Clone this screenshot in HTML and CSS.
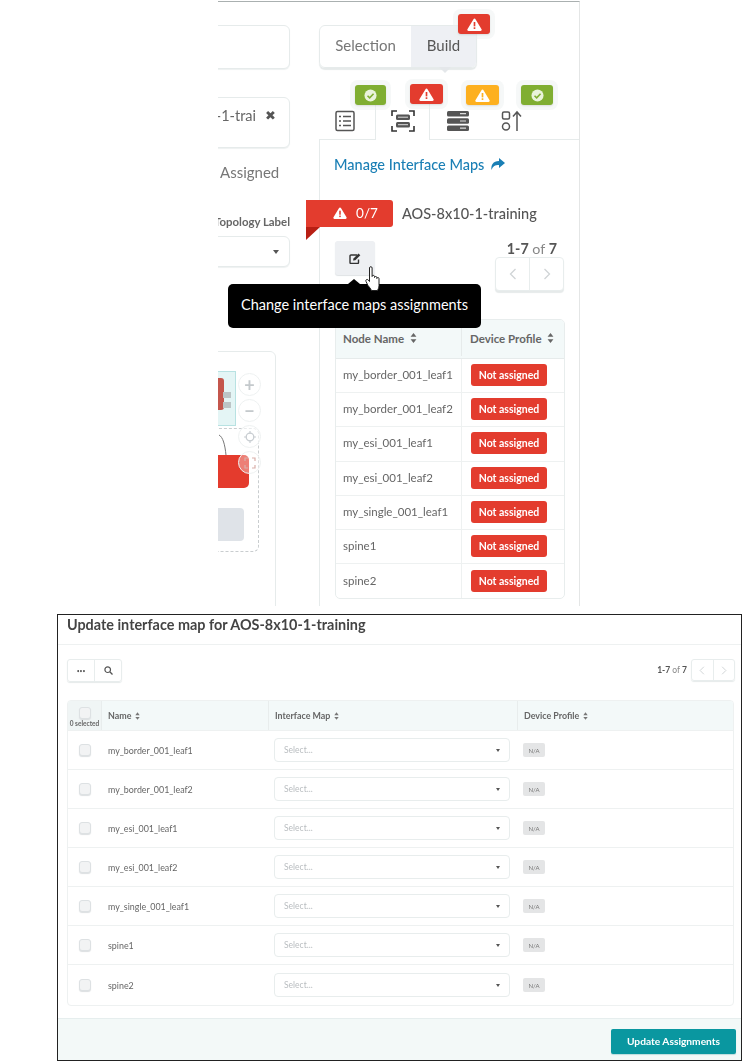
FILE: index.html
```html
<!DOCTYPE html>
<html lang="en">
<head>
<meta charset="utf-8">
<title>Interface map assignments</title>
<link rel="stylesheet" href="styles.css">
</head>
<body>
<svg class="defs" width="0" height="0" aria-hidden="true">
  <symbol id="warn" viewBox="0 0 16 14"><path d="M8 .6c.5 0 .9.3 1.1.7l6.5 10.8c.5.8-.1 1.8-1.1 1.8H1.5c-1 0-1.6-1-1.1-1.8L6.900 1.300C7.100.900 7.500.600 8 .600z" fill="#fff"/><rect class="warn-mark" x="7.100" y="4.300" width="1.800" height="4.700"/><rect class="warn-mark" x="7.100" y="10" width="1.800" height="1.800"/></symbol>
  <symbol id="ok" viewBox="0 0 14 14"><circle cx="7" cy="7" r="6.500" fill="#e9f3dc"/><path d="M3.800 7.200l2.300 2.300 4.200-4.400" fill="none" stroke="#7fae33" stroke-width="1.700"/></symbol>
  <symbol id="sort" viewBox="0 0 8 12"><path d="M4 0l3.500 4.600h-7zM4 12L.5 7.400h7z"/></symbol>
  <symbol id="chev-l" viewBox="0 0 8 12"><path d="M6.500 1L1.500 6l5 5" fill="none" stroke="currentColor" stroke-width="1.300"/></symbol>
  <symbol id="chev-r" viewBox="0 0 8 12"><path d="M1.500 1l5 5-5 5" fill="none" stroke="currentColor" stroke-width="1.300"/></symbol>
</svg>

<section class="shot">
  <div class="left">
    <div class="field field-top"></div>
    <div class="field field-chip"><span class="chip-text">AOS-8x10-1-trai</span><span class="chip-x">✖</span></div>
    <div class="assigned">Assigned</div>
    <div class="topo-label">Topology Label</div>
    <div class="field field-select"><span class="caret"></span></div>
    <div class="canvas">
      <div class="c-teal"><div class="c-red-soft"></div><div class="c-bar c-bar-a"></div><div class="c-bar c-bar-b"></div></div>
      <div class="c-dashed"></div>
      <svg class="c-curve" width="12" height="24" viewBox="0 0 12 24"><path d="M0 2c4 2 6 10 7 20" fill="none" stroke="#777" stroke-width="1"/></svg>
      <div class="c-red"></div>
      <div class="c-grey"></div>
      <div class="c-zoom">
        <div class="c-circle">+</div>
        <div class="c-circle">−</div>
        <div class="c-circle"><svg width="12" height="12" viewBox="0 0 12 12"><circle cx="6" cy="6" r="3.800" fill="none" stroke="#c9ced2" stroke-width="1.300"/><path d="M6 0v3M6 9v3M0 6h3M9 6h3" stroke="#c9ced2" stroke-width="1.200"/></svg></div>
        <div class="c-circle c-circle-fill"><svg width="12" height="12" viewBox="0 0 12 12"><path d="M1 4V1h3M8 1h3v3M11 8v3H8M4 11H1V8" fill="none" stroke="#d9b0aa" stroke-width="1.200"/></svg></div>
      </div>
    </div>
  </div>

  <div class="right">
    <div class="toggle">
      <div class="toggle-item">Selection</div>
      <div class="toggle-item toggle-on">Build</div>
      <div class="flag-badge badge-red badge-build"><svg class="i-warn"><use href="#warn"/></svg></div>
    </div>

    <div class="tabs">
      <div class="tab">
        <svg width="22" height="22" viewBox="0 0 22 22"><rect x="2" y="1.500" width="18" height="19" rx="1.500" fill="none" stroke="#555" stroke-width="1.500"/><path d="M5 6.500h2M9 6.500h8M5 11h2M9 11h8M5 15.500h2M9 15.500h8" stroke="#555" stroke-width="1.700"/></svg>
      </div>
      <div class="tab tab-active">
        <svg width="24" height="22" viewBox="0 0 24 22"><path d="M1 6V1h5M18 1h5v5M23 16v5h-5M6 21H1v-5" fill="none" stroke="#333" stroke-width="1.600"/><rect x="5" y="4.500" width="14" height="5.500" rx="1.500" fill="#555"/><rect x="5" y="12" width="14" height="5.500" rx="1.500" fill="#555"/><path d="M7 7.200h10M7 14.700h10" stroke="#ddd" stroke-width="1"/></svg>
      </div>
      <div class="tab">
        <svg width="24" height="22" viewBox="0 0 24 22"><rect x="1" y="1" width="22" height="5.500" rx="1.500" fill="#555"/><rect x="1" y="8.200" width="22" height="5.500" rx="1.500" fill="#555"/><rect x="1" y="15.500" width="22" height="5.500" rx="1.500" fill="#555"/><path d="M14 3.700h6M14 11h6M14 18.200h6" stroke="#ddd" stroke-width="1.200"/></svg>
      </div>
      <div class="tab">
        <svg width="22" height="22" viewBox="0 0 22 22"><rect x="1.500" y="2" width="7" height="7" rx="1.500" fill="none" stroke="#555" stroke-width="1.500"/><circle cx="5" cy="16.500" r="3.500" fill="none" stroke="#555" stroke-width="1.500"/><path d="M16 21V2M12 6.500L16 2l4 4.500" fill="none" stroke="#555" stroke-width="1.500"/></svg>
      </div>
      <div class="flag-badge badge-green badge-t1"><svg class="i-ok"><use href="#ok"/></svg></div>
      <div class="flag-badge badge-red badge-t2"><svg class="i-warn"><use href="#warn"/></svg></div>
      <div class="flag-badge badge-amber badge-t3"><svg class="i-warn i-warn-amber"><use href="#warn"/></svg></div>
      <div class="flag-badge badge-green badge-t4"><svg class="i-ok"><use href="#ok"/></svg></div>
    </div>

    <div class="panel">
      <div class="manage">Manage Interface Maps
        <svg width="15" height="12" viewBox="0 0 15 12"><path d="M9 0l6 5-6 5V7C5 7 3 8 1.500 12 .8 7 3 3 9 3z" fill="#1a7fb5"/></svg>
      </div>
      <div class="bp-row">
        <div class="ribbon"><svg class="i-warn i-warn-lg"><use href="#warn"/></svg><span>0/7</span></div>
        <div class="bp-name">AOS-8x10-1-training</div>
      </div>
      <div class="tools">
        <div class="edit-btn">
          <svg width="12" height="11" viewBox="0 0 12 11"><path d="M8 2H2a1 1 0 0 0-1 1v6.500a1 1 0 0 0 1 1h6.500a1 1 0 0 0 1-1V6.500" fill="none" stroke="#333" stroke-width="1.400"/><path d="M4 7.500l.5-2L9.500.5l1.800 1.800-5 5z" fill="#333"/></svg>
        </div>
        <div class="pager-wrap">
          <div class="count"><b>1-7</b> of <b>7</b></div>
          <div class="pager"><span><svg width="8" height="12"><use href="#chev-l"/></svg></span><span><svg width="8" height="12"><use href="#chev-r"/></svg></span></div>
        </div>
      </div>
      <div class="nodes">
        <div class="nodes-head"><div class="nh-a">Node Name <svg class="i-sort"><use href="#sort"/></svg></div><div class="nh-b">Device Profile <svg class="i-sort"><use href="#sort"/></svg></div></div>
        <div class="node-row"><div class="nr-a">my_border_001_leaf1</div><div class="nr-b"><span class="na-badge">Not assigned</span></div></div>
        <div class="node-row"><div class="nr-a">my_border_001_leaf2</div><div class="nr-b"><span class="na-badge">Not assigned</span></div></div>
        <div class="node-row"><div class="nr-a">my_esi_001_leaf1</div><div class="nr-b"><span class="na-badge">Not assigned</span></div></div>
        <div class="node-row"><div class="nr-a">my_esi_001_leaf2</div><div class="nr-b"><span class="na-badge">Not assigned</span></div></div>
        <div class="node-row"><div class="nr-a">my_single_001_leaf1</div><div class="nr-b"><span class="na-badge">Not assigned</span></div></div>
        <div class="node-row"><div class="nr-a">spine1</div><div class="nr-b"><span class="na-badge">Not assigned</span></div></div>
        <div class="node-row"><div class="nr-a">spine2</div><div class="nr-b"><span class="na-badge">Not assigned</span></div></div>
      </div>
    </div>
  </div>

  <div class="tooltip">Change interface maps assignments</div>
  <svg class="hand" width="18" height="27" viewBox="0 0 18 27"><path d="M4.500 2c0-1.800 2.600-1.800 2.600 0v8.500c0-1.500 2.400-1.500 2.400 0v1c0-1.400 2.300-1.400 2.300 0v1c0-1.300 2.200-1.300 2.200 0v7c0 2.500-1 3.500-1.500 5H6.500c-.8-2-2-3-3.500-5L1 15.500c-.8-1.600 1-2.800 2.300-1.500l1.200 1.500z" fill="#fff" stroke="#222" stroke-width="1"/></svg>
</section>

<section class="modal">
  <header class="m-title">Update interface map for AOS-8x10-1-training</header>
  <div class="m-body">
    <div class="m-tools">
      <div class="btn-group">
        <span class="dots">•••</span>
        <span class="mag"><svg width="9" height="9" viewBox="0 0 9 9"><circle cx="3.700" cy="3.700" r="2.800" fill="none" stroke="#555" stroke-width="1.200"/><path d="M5.800 5.800L8.500 8.500" stroke="#555" stroke-width="1.300"/></svg></span>
      </div>
      <div class="m-pager-wrap">
        <div class="m-count"><b>1-7</b> of <b>7</b></div>
        <div class="m-pager"><span><svg width="6" height="9"><use href="#chev-l"/></svg></span><span><svg width="6" height="9"><use href="#chev-r"/></svg></span></div>
      </div>
    </div>
    <div class="m-table">
      <div class="m-row m-head">
        <div class="m-c1 m-c1-head"><span class="cb"></span><span class="sel-count">0 selected</span></div>
        <div class="m-c2">Name <svg class="i-sort-sm"><use href="#sort"/></svg></div>
        <div class="m-c3">Interface Map <svg class="i-sort-sm"><use href="#sort"/></svg></div>
        <div class="m-c4">Device Profile <svg class="i-sort-sm"><use href="#sort"/></svg></div>
      </div>
      <div class="m-row"><div class="m-c1"><span class="cb"></span></div><div class="m-c2">my_border_001_leaf1</div><div class="m-c3"><div class="m-select">Select...<span class="caret caret-sm"></span></div></div><div class="m-c4"><span class="tag">N/A</span></div></div>
      <div class="m-row"><div class="m-c1"><span class="cb"></span></div><div class="m-c2">my_border_001_leaf2</div><div class="m-c3"><div class="m-select">Select...<span class="caret caret-sm"></span></div></div><div class="m-c4"><span class="tag">N/A</span></div></div>
      <div class="m-row"><div class="m-c1"><span class="cb"></span></div><div class="m-c2">my_esi_001_leaf1</div><div class="m-c3"><div class="m-select">Select...<span class="caret caret-sm"></span></div></div><div class="m-c4"><span class="tag">N/A</span></div></div>
      <div class="m-row"><div class="m-c1"><span class="cb"></span></div><div class="m-c2">my_esi_001_leaf2</div><div class="m-c3"><div class="m-select">Select...<span class="caret caret-sm"></span></div></div><div class="m-c4"><span class="tag">N/A</span></div></div>
      <div class="m-row"><div class="m-c1"><span class="cb"></span></div><div class="m-c2">my_single_001_leaf1</div><div class="m-c3"><div class="m-select">Select...<span class="caret caret-sm"></span></div></div><div class="m-c4"><span class="tag">N/A</span></div></div>
      <div class="m-row"><div class="m-c1"><span class="cb"></span></div><div class="m-c2">spine1</div><div class="m-c3"><div class="m-select">Select...<span class="caret caret-sm"></span></div></div><div class="m-c4"><span class="tag">N/A</span></div></div>
      <div class="m-row"><div class="m-c1"><span class="cb"></span></div><div class="m-c2">spine2</div><div class="m-c3"><div class="m-select">Select...<span class="caret caret-sm"></span></div></div><div class="m-c4"><span class="tag">N/A</span></div></div>
    </div>
  </div>
  <footer class="m-foot"><div class="update-btn">Update Assignments</div></footer>
</section>
</body>
</html>
```

FILE: styles.css
```css
* { box-sizing: border-box; }
html, body { margin: 0; padding: 0; background: #fff; }
body { width: 742px; height: 1062px; overflow: hidden; font-family: Lato, "Open Sans", sans-serif; color: #555; }
.defs { position: absolute; }

/* ---------- top screenshot ---------- */
.shot {
  position: relative; display: flex; width: 362px; height: 605px; margin: 1px 0 0 218px;
  border-top: 1px solid #aab0b0; border-right: 1px solid #e4e6e6; overflow: hidden; filter: blur(.6px);
}
.left { flex: none; width: 101px; display: flex; flex-direction: column; }
.field { margin: 0 29px 0 -12px; border: 1px solid #e6ebeb; border-radius: 6px; background: #fff; box-shadow: 0 1px 1px #eef1f1; flex: none; position: relative; }
.field-top { height: 44px; margin-top: 23px; }
.field-chip { height: 51px; margin-top: 28px; display: flex; justify-content: flex-end; align-items: flex-start; gap: 9px; padding: 8px 13px 0 0; font-size: 14.500px; color: #666; white-space: nowrap; }
.chip-text { line-height: 19px; }
.chip-x { font-size: 13px; line-height: 19px; color: #555; }
.assigned { font-size: 15px; line-height: 20px; margin: 14px 0 0 2px; color: #777; white-space: nowrap; height: 20px; }
.topo-label { display: flex; justify-content: flex-end; margin: 33px 29px 0 0; height: 14px; font-size: 11.400px; line-height: 14px; font-weight: 700; color: #666; white-space: nowrap; }
.field-select { height: 31px; margin-top: 7px; }
.caret { position: absolute; right: 10px; top: 13px; border: 3.500px solid transparent; border-top: 4px solid #555; border-bottom: 0; }
.canvas { position: relative; flex: none; height: 300px; margin: 84px 43px 0 -12px; border: 1px solid #e6ebeb; border-radius: 6px; }
.c-teal { position: absolute; left: 0; top: 19px; width: 29px; height: 55px; background: #e4f5f5; border: 1px solid #b8e2e2; overflow: hidden; }
.c-red-soft { position: absolute; right: 11px; top: 6px; width: 20px; height: 32px; background: #c4564c; border-radius: 3px; }
.c-bar { position: absolute; right: 4px; width: 8px; height: 6px; background: #bcc5c6; }
.c-bar-a { top: 20px; }
.c-bar-b { top: 30px; }
.c-dashed { position: absolute; left: -4px; top: 76px; width: 56px; height: 124px; border: 1.500px dashed #c9cdcf; border-radius: 6px; }
.c-curve { position: absolute; left: 12px; top: 81px; }
.c-red { position: absolute; left: 0; top: 103px; width: 42px; height: 33px; background: #e43b2d; border-radius: 0 5px 5px 0; }
.c-grey { position: absolute; left: 0; top: 156px; width: 37px; height: 33px; background: #dfe3e8; border-radius: 0 4px 4px 0; }
.c-zoom { position: absolute; left: 31px; top: 21px; display: flex; flex-direction: column; gap: 3px; }
.c-circle { width: 23px; height: 23px; border: 1px solid #eef1f1; border-radius: 50%; background: rgba(255,255,255,.6); display: flex; align-items: center; justify-content: center; font-size: 18px; line-height: 1; font-weight: 700; color: #c4c9cc; }
.c-circle-fill { background: rgba(255,255,255,.35); }

.right { flex: none; width: 260px; display: flex; flex-direction: column; }
.toggle { position: relative; display: flex; width: 158px; height: 43px; margin-top: 23px; border: 1px solid #e6ebeb; border-radius: 6px; box-shadow: 0 2px 1px #e6eaea; flex: none; }
.toggle-item { width: 91px; display: flex; align-items: center; justify-content: center; font-size: 15px; color: #777; padding-bottom: 4px; }
.toggle-on { flex: 1; width: auto; background: #eef0f4; border-radius: 0 5px 5px 0; color: #555; }
.toggle-on::after { content: ""; position: absolute; left: 119px; bottom: -6px; border: 6px solid transparent; border-top: 6px solid #e4e7ea; border-bottom: 0; }
.flag-badge { position: absolute; display: flex; align-items: center; justify-content: center; border-radius: 3px; height: 20px; box-shadow: 0 0 0 5px rgba(235,240,240,.45), 0 1px 2px rgba(0,0,0,.2); z-index: 2; }
.badge-red { background: #e33c2e; --mark: #e33c2e; }
.badge-green { background: #80ae32; }
.badge-amber { background: #fdb01f; --mark: #fdb01f; }
.badge-build { left: 138px; top: -12px; width: 32px; }
.i-warn { width: 15px; height: 13px; }
.warn-mark { fill: var(--mark, #e33c2e); }
.i-ok { width: 13px; height: 13px; }

.tabs { position: relative; flex: none; display: flex; height: 67px; margin-top: 5px; }
.tab { position: relative; flex: none; width: 55px; height: 67px; padding-top: 37px; display: flex; justify-content: center; border-bottom: 1px solid #e6ebeb; }
.tab:nth-child(1) { width: 56px; padding-right: 5px; }
.tab svg { flex: none; }
.tab-active { width: 55px; border: 1px solid #e6ebeb; border-bottom: 0; padding-top: 36px; clip-path: inset(23px -1px 0 -1px); }
.tab:nth-child(3) { width: 56px; padding-right: 0; }
.tab:nth-child(4) { flex: 1; justify-content: flex-start; padding-left: 15px; }
.badge-t1 { left: 36px; top: 12px; width: 31px; }
.badge-t2 { left: 91px; top: 11px; width: 33px; }
.badge-t3 { left: 147px; top: 12px; width: 33px; }
.badge-t4 { left: 202px; top: 12px; width: 32px; }

.panel { flex: 1; border-left: 1px solid #e6ebeb; padding: 0 0 0 15px; display: flex; flex-direction: column; }
.manage { display: flex; align-items: center; gap: 6px; height: 18px; margin-top: 15px; margin-left: -1px; font-size: 14.500px; color: #1a7fb5; white-space: nowrap; font-weight: 500; }
.bp-row { display: flex; align-items: center; height: 27px; margin: 27px 0 0 -29px; position: relative; }
.ribbon { position: relative; width: 87px; height: 27px; background: #e33c2e; border-radius: 0 3px 3px 0; color: #fff; display: flex; align-items: center; justify-content: center; gap: 9px; font-size: 13.500px; font-weight: 400; padding-left: 12px; padding-bottom: 2px; --mark: #e33c2e; }
.ribbon::after { content: ""; position: absolute; left: 0; top: 27px; border-top: 13px solid #b81f14; border-left: 14px solid transparent; transform: scaleX(-1); }
.i-warn-lg { width: 14px; height: 12px; }
.bp-name { margin-left: 9px; font-size: 14.500px; color: #555; font-weight: 500; white-space: nowrap; }
.tools { display: flex; justify-content: space-between; height: 51px; margin-top: 14px; flex: none; }
.edit-btn { width: 40px; height: 34px; background: #eef0f3; border-radius: 3px; box-shadow: 0 1px 1px #dfe3e5; display: flex; align-items: center; justify-content: center; }
.pager-wrap { display: flex; flex-direction: column; align-items: flex-end; width: 70px; margin-right: 15px; position: relative; }
.count { font-size: 14.300px; line-height: 18px; color: #888; margin: -1px 7px 0 0; white-space: nowrap; }
.count b { font-weight: 700; color: #555; }
.pager { display: flex; width: 69px; height: 34px; margin-top: -1px; border: 1px solid #e8eded; border-radius: 4px; box-shadow: 0 2px 1px #e6eaea; background: #fff; }
.pager span { flex: 1; display: flex; align-items: center; justify-content: center; color: #d0d4d6; }
.pager span + span { border-left: 1px solid #e8eded; }
.nodes { width: 230px; margin-top: 27px; border: 1px solid #e8eded; border-radius: 5px; flex: none; overflow: hidden; }
.nodes-head { display: flex; height: 39px; background: #f3f9f9; border-bottom: 1px solid #e6ebeb; font-size: 11.500px; font-weight: 700; color: #666; white-space: nowrap; padding-bottom: 2px; }
.nh-a { width: 126px; padding-left: 7px; display: flex; align-items: center; gap: 6px; border-right: 1px solid #e6ebeb; }
.nh-b { flex: 1; padding-left: 8px; display: flex; align-items: center; gap: 5px; }
.i-sort { width: 7px; height: 10px; fill: #666; flex: none; }
.node-row { display: flex; height: 34.200px; border-bottom: 1px solid #eef1f1; font-size: 11.500px; color: #666; }
.node-row:last-child { border-bottom: 0; }
.nr-a { width: 126px; padding: 0 0 2px 7px; display: flex; align-items: center; border-right: 1px solid #eef1f1; white-space: nowrap; }
.nr-b { flex: 1; padding: 0 0 1px 9px; display: flex; align-items: center; }
.na-badge { width: 76px; height: 22px; background: #e33c2e; border-radius: 3px; color: #fff; font-size: 10.500px; font-weight: 700; display: flex; align-items: center; justify-content: center; white-space: nowrap; }

.tooltip { position: absolute; left: 10px; top: 282px; width: 253px; height: 44px; padding-bottom: 4px; background: #000; color: #fff; border-radius: 5px; display: flex; align-items: center; justify-content: center; font-size: 14.500px; z-index: 4; }
.tooltip::before { content: ""; position: absolute; left: 120px; top: -5px; border: 6px solid transparent; border-bottom: 5px solid #000; border-top: 0; }
.hand { position: absolute; left: 147px; top: 264px; z-index: 5; }

/* ---------- modal ---------- */
.modal { display: flex; flex-direction: column; width: 685px; height: 447px; margin: 8px 0 0 57px; border: 1.500px solid #222; background: #fff; filter: blur(.5px); }
.m-title { flex: none; height: 30px; padding: 0 0 0 9px; border-bottom: 1px solid #eef1f1; font-size: 14.400px; line-height: 19px; color: #444; white-space: nowrap; font-weight: 700; }
.m-body { flex: 1; padding: 14px 6px 0 9px; }
.m-tools { display: flex; justify-content: space-between; align-items: flex-start; height: 41px; }
.btn-group { display: flex; width: 55px; height: 23px; border: 1px solid #e8eded; border-radius: 3px; box-shadow: 0 1px 1px #e6eaea; }
.btn-group span { display: flex; align-items: center; justify-content: center; }
.dots { width: 27px; border-right: 1px solid #e8eded; font-size: 5px; color: #555; }
.mag { flex: 1; }
.m-pager-wrap { display: flex; align-items: center; gap: 4px; }
.m-count { font-size: 8.500px; color: #888; white-space: nowrap; }
.m-count b { font-weight: 700; color: #555; }
.m-pager { display: flex; width: 44px; height: 22px; border: 1px solid #e8eded; border-radius: 3px; box-shadow: 0 1px 1px #e6eaea; }
.m-pager span { flex: 1; display: flex; align-items: center; justify-content: center; color: #d0d4d6; }
.m-pager span + span { border-left: 1px solid #e8eded; }
.m-table { width: 667px; border: 1px solid #eef1f1; border-radius: 4px; overflow: hidden; }
.m-row { display: flex; height: 39px; align-items: stretch; border-bottom: 1px solid #eef1f1; font-size: 8.900px; color: #666; }
.m-row:last-child { border-bottom: 0; height: 40px; }
.m-head { height: 30px; background: #f3f9f9; font-weight: 700; }
.m-c1 { width: 34px; display: flex; align-items: center; justify-content: center; flex: none; }
.m-c1-head { flex-direction: column; gap: 1px; background: #f0f5f5; border-right: 1px solid #e8eded; padding-top: 2px; }
.m-c2 { width: 166px; padding-left: 6px; display: flex; align-items: center; gap: 4px; flex: none; white-space: nowrap; }
.m-c3 { width: 249px; padding: 0 7px 0 6px; display: flex; align-items: center; gap: 4px; flex: none; white-space: nowrap; }
.m-c4 { flex: 1; padding-left: 6px; display: flex; align-items: center; gap: 4px; white-space: nowrap; }
.m-head .m-c3, .m-head .m-c4 { border-left: 1px solid #e8eded; }
.i-sort-sm { width: 5px; height: 8px; fill: #777; flex: none; }
.cb { width: 12px; height: 12px; border: 1px solid #dde1e3; border-radius: 3px; background: #f2f3f4; box-shadow: 0 1px 1px #dcdfe1; flex: none; }
.sel-count { font-size: 6.500px; line-height: 7px; white-space: nowrap; color: #666; }
.m-select { position: relative; width: 236px; height: 24px; border: 1px solid #e8eded; border-radius: 4px; padding-left: 9px; line-height: 22px; color: #b9bdc0; font-size: 8.500px; }
.caret-sm { right: 9px; top: 10px; border-width: 2.500px; border-top-width: 3px; border-bottom: 0; }
.tag { width: 22px; height: 14px; background: #e4e5e6; border-radius: 2px; font-size: 6px; color: #777; display: flex; align-items: center; justify-content: center; }
.m-foot { flex: none; height: 42px; background: #f3f9f8; border-top: 1px solid #e6eeee; display: flex; justify-content: flex-end; align-items: flex-start; padding: 10px 5px 0 0; }
.update-btn { width: 125px; height: 25px; background: #0a97a0; border-radius: 2px; box-shadow: 0 1px 1px #bcdcdc; color: #fff; font-size: 10.200px; font-weight: 700; display: flex; align-items: center; justify-content: center; padding-bottom: 2px; white-space: nowrap; }
```
